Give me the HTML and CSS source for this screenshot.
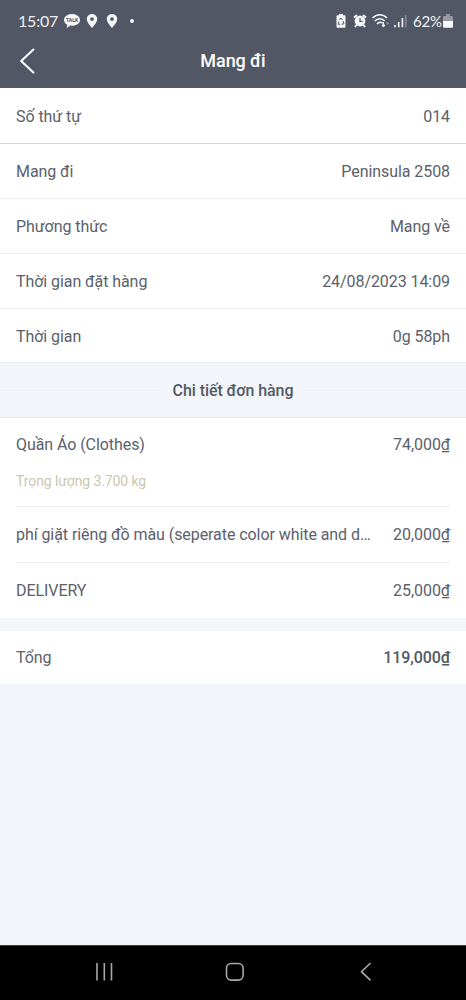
FILE: index.html
```html
<!DOCTYPE html>
<html lang="vi">
<head>
<meta charset="utf-8">
<title>Mang đi</title>
<link rel="stylesheet" href="styles.css">
</head>
<body>
<div class="app">
  <header class="header">
    <div class="status">
      <span class="clock">15:07</span>
      <svg class="talk" width="16" height="16" viewBox="0 0 16 16"><path d="M8 1C3.6 1 0 3.600 0 6.900c0 2.100 1.300 3.900 3.300 4.900L2.700 15l3.700-2.400c.5.100 1 .1 1.600.1 4.400 0 8-2.500 8-5.800S12.400 1 8 1z" fill="#f5f6f7"/><text class="talk-text" x="8" y="8.900" text-anchor="middle" textLength="12">TALK</text></svg>
      <svg class="pin" width="12" height="16" viewBox="0 0 12 16"><path fill-rule="evenodd" d="M6 1C3.100 1 .8 3.200.8 6c0 3.600 5.200 9 5.200 9s5.200-5.400 5.200-9c0-2.800-2.300-5-5.200-5zm0 3.200a1.900 1.900 0 1 1 0 3.800 1.900 1.900 0 0 1 0-3.800z" fill="#f5f6f7"/></svg>
      <svg class="pin" width="12" height="16" viewBox="0 0 12 16"><path fill-rule="evenodd" d="M6 1C3.100 1 .8 3.200.8 6c0 3.600 5.200 9 5.200 9s5.200-5.400 5.200-9c0-2.800-2.300-5-5.200-5zm0 3.200a1.900 1.900 0 1 1 0 3.800 1.900 1.900 0 0 1 0-3.800z" fill="#f5f6f7"/></svg>
      <span class="dot"></span>
      <svg class="saver" width="10" height="16" viewBox="0 0 10 16"><path d="M3 1h4v1.300h1.300c.8 0 1.200.5 1.200 1.200v10c0 .8-.5 1.300-1.200 1.300H1.700C1 14.800.5 14.300.5 13.500v-10c0-.7.500-1.200 1.200-1.200H3z" fill="#f5f6f7"/><path d="M3.300 7 5 5l1.800 2M7.300 8.200l.6 2.600-2.500.5M4 11.300H2.300l.5-2.800" fill="none" stroke="#515765" stroke-width="1"/></svg>
      <svg class="alarm" width="14" height="16" viewBox="0 0 14 16"><circle cx="7" cy="8" r="5.400" fill="#f5f6f7"/><path d="M1 4.600 4 2M13 4.600 10 2M3.500 12 2 14M10.500 12l1.500 2" stroke="#f5f6f7" stroke-width="2"/><path d="M7 5v3.400h2.600" fill="none" stroke="#515765" stroke-width="1.200"/></svg>
      <svg class="wifi" width="18" height="16" viewBox="0 0 18 16"><path d="M.6 5C4.800.6 10.800.6 15 5M2.800 8C5.800 4.900 9.800 4.900 12.800 8M5 11C7 8.800 9 8.800 10.600 10.300" fill="none" stroke="#f5f6f7" stroke-width="1.600"/><path d="M11.500 9v4.600M10 12l1.500 2 1.500-2z" fill="#f5f6f7" stroke="#f5f6f7" stroke-width="1"/><path d="M15.500 12V9M14.300 10.500l1.200-1.500 1.200 1.500z" fill="#858a95" stroke="#858a95" stroke-width=".8"/></svg>
      <svg class="signal" width="13" height="16" viewBox="0 0 13 16"><path d="M1 12v2.300M4.700 9v5.300M8.400 5v9.300" stroke="#f5f6f7" stroke-width="1.600"/><path d="M11.700 2v12.300" stroke="#858a95" stroke-width="1.600"/></svg>
      <span class="percent">62%</span>
      <svg class="battery" width="10" height="16" viewBox="0 0 10 16"><path d="M0 8V4.500C0 3.500.6 3 1.500 3H3V1h4v2h1.500c.9 0 1.500.5 1.500 1.500V8z" fill="#9599a2"/><path d="M0 8h10v5.500c0 .9-.5 1.300-1.300 1.300H1.300C.5 14.800 0 14.400 0 13.500z" fill="#f9fafa"/></svg>
    </div>
    <div class="titlebar">
      <svg class="back" width="16" height="28" viewBox="0 0 16 28"><path d="M13.400 2.500 1.200 14l12.200 11.500" fill="none" stroke="#fff" stroke-width="2" stroke-linecap="round" stroke-linejoin="round"/></svg>
      <h1 class="title">Mang đi</h1>
    </div>
  </header>
  <main class="content">
    <section class="info">
      <div class="row row-strong"><span>Số thứ tự</span><span>014</span></div>
      <div class="row"><span>Mang đi</span><span>Peninsula 2508</span></div>
      <div class="row"><span>Phương thức</span><span>Mang về</span></div>
      <div class="row"><span>Thời gian đặt hàng</span><span>24/08/2023 14:09</span></div>
      <div class="row row-last"><span>Thời gian</span><span>0g 58ph</span></div>
    </section>
    <div class="divider"><span class="rule"></span><h2 class="divider-title">Chi tiết đơn hàng</h2><span class="rule"></span></div>
    <section class="items">
      <div class="item item-weighted">
        <div class="line"><span class="name">Quần Áo (Clothes)</span><span>74,000₫</span></div>
        <div class="weight">Trọng lượng 3.700 kg</div>
      </div>
      <div class="item"><div class="line"><span class="name">phí giặt riêng đồ màu (seperate color white and d…</span><span>20,000₫</span></div></div>
      <div class="item item-last"><div class="line"><span class="name">DELIVERY</span><span>25,000₫</span></div></div>
    </section>
    <section class="total"><span>Tổng</span><span class="amount">119,000₫</span></section>
  </main>
  <nav class="nav">
    <svg width="18" height="20" viewBox="0 0 18 20"><path d="M2 1v17.500M9.300 1v17.500M16.500 1v17.500" stroke="#a9a9a9" stroke-width="1.600"/></svg>
    <svg class="home" width="20" height="20" viewBox="0 0 20 20"><rect x="1.500" y="1.500" width="16.600" height="16.600" rx="4.800" fill="none" stroke="#a9a9a9" stroke-width="1.600"/></svg>
    <svg width="12" height="20" viewBox="0 0 12 20"><path d="M10.500 1 1.500 9.700l9 8.700" fill="none" stroke="#a9a9a9" stroke-width="1.600"/></svg>
  </nav>
</div>
</body>
</html>
```
FILE: styles.css
```css
* { box-sizing: border-box; }
body { margin: 0; font-family: Roboto, "Noto Sans", sans-serif; font-size: 16px; letter-spacing: -0.07px; color: #5b616b; }
svg { display: block; flex: none; }
.app { display: flex; flex-direction: column; width: 466px; height: 1000px; background: #f2f6fa; }
.header { height: 88px; background: #515765; color: #fff; flex: none; }
.status { display: flex; align-items: center; height: 34px; padding: 7px 13px 0 18px; }
.clock { width: 41px; margin-right: 5px; font: 16px/20px Lato, sans-serif; letter-spacing: -0.2px; color: #eef0f2; white-space: nowrap; }
.talk { margin-right: 6px; }
.talk-text { font: 700 5px Roboto, sans-serif; fill: #515765; }
.pin { margin-right: 8px; }
.dot { width: 4px; height: 4px; margin-left: 4px; border-radius: 50%; background: #f5f6f7; }
.saver { margin-left: auto; margin-right: 7px; }
.alarm { margin-right: 5px; }
.wifi { margin-right: 4px; }
.signal { margin-right: 6px; }
.percent { width: 29px; margin-right: 1px; font: 15px/20px Lato, sans-serif; letter-spacing: -0.2px; color: #f0f1f3; white-space: nowrap; }
.titlebar { display: grid; grid-template-columns: 16px 1fr 16px; align-items: center; height: 54px; padding: 0 20px; }
.title { margin: 0; text-align: center; font-size: 18px; line-height: 24px; font-weight: 500; }
.content { flex: 1; }
.info, .items { background: #fff; }
.row { display: flex; justify-content: space-between; align-items: center; height: 55px; padding: 0 16px; border-bottom: 1px solid #eceeef; }
.row-strong { height: 56px; padding-top: 2px; border-color: #d6d9dc; }
.row-last { height: 54px; padding-top: 1px; border-bottom-color: #ebeef1; }
.divider { display: flex; align-items: center; gap: 12px; height: 55px; padding-top: 1px; border-bottom: 1px solid #e9edf0; }
.rule { flex: 1; height: 1px; background: #edf1f4; }
.divider-title { margin: 0; font-size: 16px; line-height: 24px; font-weight: 500; color: #535965; }
.items { padding: 0 16px; }
.item { height: 56px; padding-top: 16px; border-bottom: 1px solid #eceeef; }
.item-weighted { height: 89px; padding-top: 15px; }
.item-last { height: 55px; border-bottom: 0; }
.line { display: flex; justify-content: space-between; line-height: 24px; gap: 12px; }
.name { white-space: nowrap; }
.weight { margin-top: 14px; font-size: 14px; line-height: 20px; letter-spacing: -0.1px; color: #cbc8ad; }
.total { display: flex; align-items: center; justify-content: space-between; height: 53px; margin-top: 13px; padding: 0 16px; background: #fff; }
.amount { font-weight: 500; color: #535861; }
.nav { display: flex; align-items: center; justify-content: space-between; height: 55px; flex: none; padding: 0 94px 2px 95px; background: #000; border-top: 1px solid #3a3c3e; }
.home { margin-right: 4px; }
```
